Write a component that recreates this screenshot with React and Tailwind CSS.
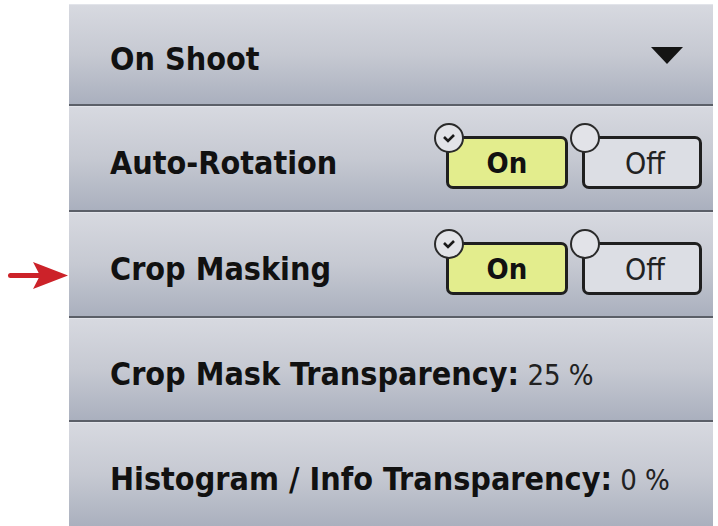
const font = {
  fontFamily: '"DejaVu Sans Condensed", "DejaVu Sans", sans-serif',
  fontStretch: "condensed",
};

function Arrow() {
  return (
    <svg width="64" height="30" viewBox="0 0 64 30" className="ml-[6px]">
      <rect x="2" y="12" width="34" height="5" rx="2.5" fill="#cc2229" />
      <path d="M27 1 L62 14.5 L27 28 L34 14.5 Z" fill="#cc2229" />
    </svg>
  );
}

function Toggle({ on }) {
  return (
    <div className="flex gap-[14px] mt-[7px]">
      <div
        className={`relative w-[122px] h-[53px] rounded-[7px] border-[3px] border-[#1f1f1f] flex items-center justify-center ${
          on ? "bg-[#e3ed8d]" : "bg-[#dcdee4]"
        }`}
      >
        <div className="absolute -left-[15px] -top-[16px] w-[30px] h-[30px] rounded-full border-[2.5px] border-[#2a2a2a] bg-[#e2e3e8] flex items-center justify-center">
          {on && (
            <svg width="14" height="10" viewBox="0 0 14 10">
              <path d="M2 4 L6 8 L12 2" stroke="#1a1a1a" strokeWidth="2.6" fill="none" />
            </svg>
          )}
        </div>
        <span className={`text-[29px] text-[#111] mt-[3px] ${on ? "font-bold" : ""}`}>On</span>
      </div>
      <div
        className={`relative w-[120px] h-[53px] rounded-[7px] border-[3px] border-[#1f1f1f] flex items-center justify-center ${
          on ? "bg-[#dcdee4]" : "bg-[#e3ed8d]"
        }`}
      >
        <div className="absolute -left-[15px] -top-[16px] w-[30px] h-[30px] rounded-full border-[2.5px] border-[#2a2a2a] bg-[#e2e3e8]" />
        <span className="text-[30px] text-[#222] mt-[3px] ml-[6px]">Off</span>
      </div>
    </div>
  );
}

function Row({ height, arrow, children, pr = "pr-[11px]" }) {
  return (
    <div className="flex">
      <div className="w-[69px] shrink-0 pt-[49px]">{arrow && <Arrow />}</div>
      <div
        className={`flex-1 mr-[5px] ${height} flex items-center justify-between pl-[41px] ${pr} bg-gradient-to-b from-[#d7d9e0] via-[#c6c9d2] to-[#aab0be] border-t border-[#e2e4ea] border-b-2 border-b-[#5b5f68]`}
      >
        {children}
      </div>
    </div>
  );
}

export default function App() {
  return (
    <div className="w-[718px] h-[526px] overflow-hidden bg-white pt-[4px]" style={font}>
      <Row height="h-[102px]" pr="pr-[30px]">
        <span className="text-[32px] font-bold text-[#111] mt-[8px]">On Shoot</span>
        <svg width="32" height="17" viewBox="0 0 32 17" className="mt-[1px]">
          <path d="M0 0 L32 0 L16 17 Z" fill="#141414" />
        </svg>
      </Row>
      <Row height="h-[106px]">
        <span className="text-[32px] font-bold text-[#111] mt-[8px]">Auto-Rotation</span>
        <Toggle on />
      </Row>
      <Row height="h-[106px]" arrow>
        <span className="text-[32px] font-bold text-[#111] mt-[8px]">Crop Masking</span>
        <Toggle on />
      </Row>
      <Row height="h-[104px]">
        <span className="text-[32px] text-[#111] mt-[8px]">
          <span className="font-bold">Crop Mask Transparency:</span>
          <span className="text-[29px] text-[#222]"> 25 %</span>
        </span>
      </Row>
      <Row height="h-[106px]">
        <span className="text-[32px] text-[#111] mt-[8px]">
          <span className="font-bold">Histogram / Info Transparency:</span>
          <span className="text-[29px] text-[#222]"> 0 %</span>
        </span>
      </Row>
    </div>
  );
}
